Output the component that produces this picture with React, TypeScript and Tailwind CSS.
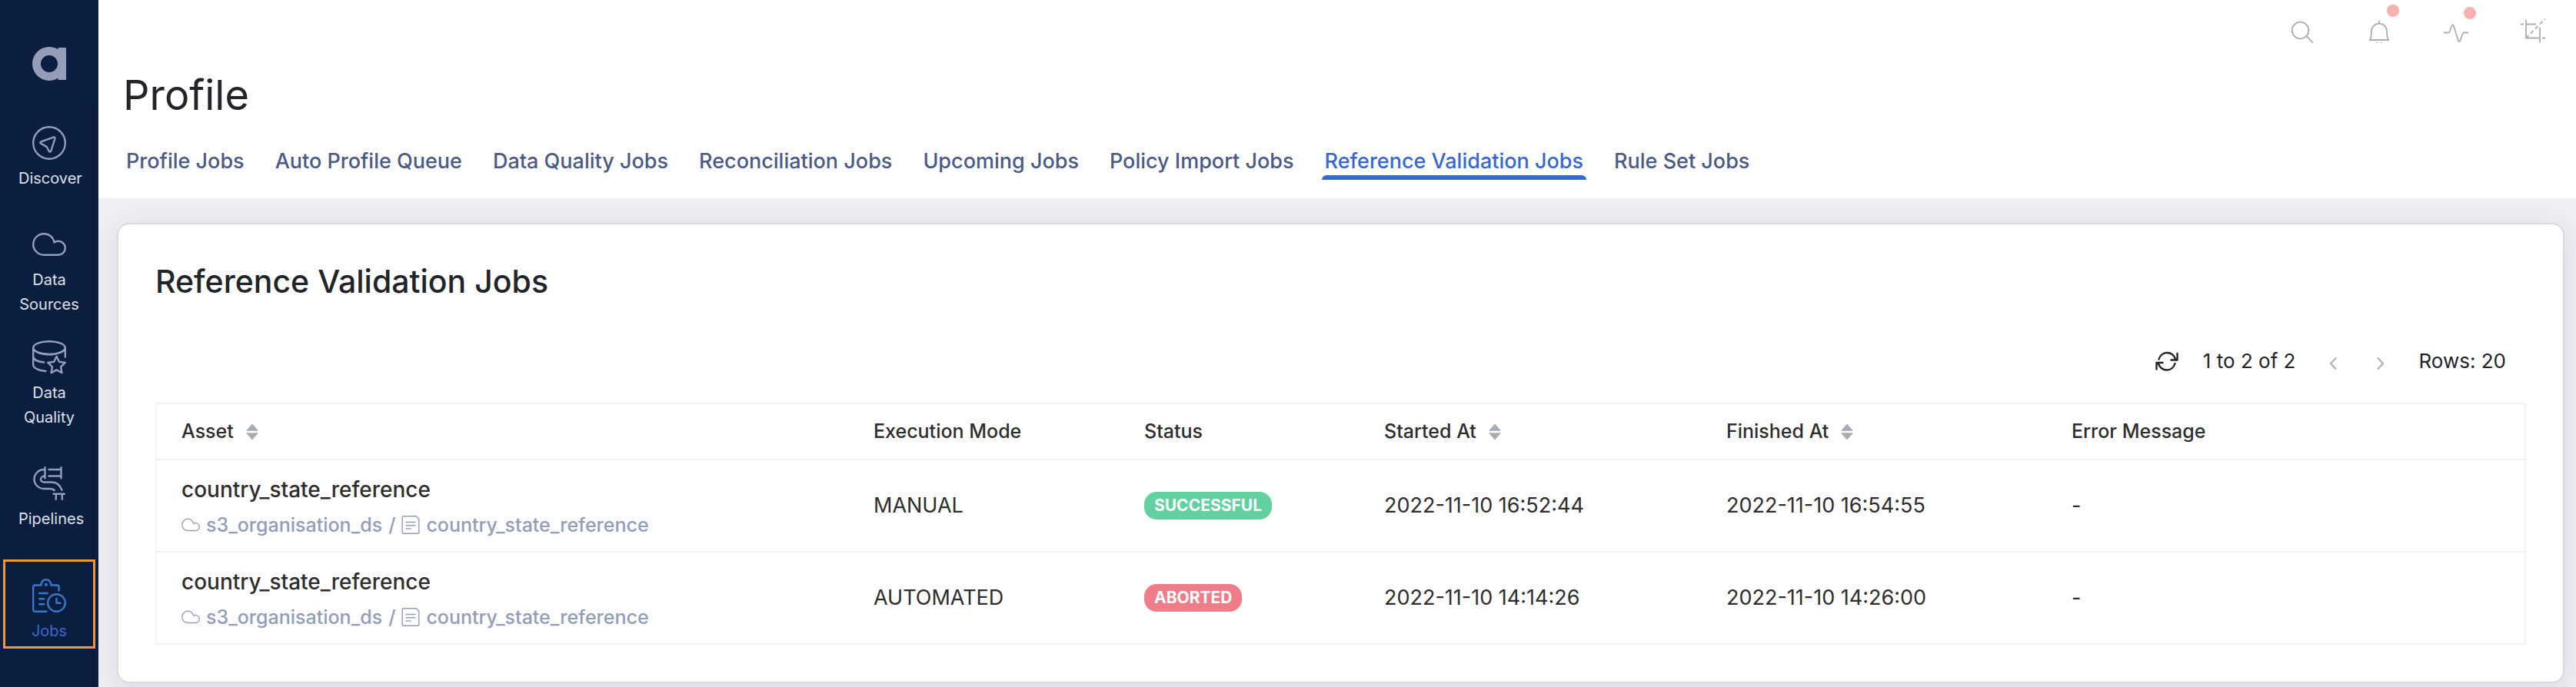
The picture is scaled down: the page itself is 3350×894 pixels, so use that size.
import type { ReactNode } from "react";

interface NavItem {
  label: string;
  icon: ReactNode;
  spacing: string;
  active?: boolean;
}

interface Job {
  id: number;
  asset: string;
  source: string;
  mode: string;
  status: "SUCCESSFUL" | "ABORTED";
  startedAt: string;
  finishedAt: string;
  error: string;
}

const tabs = [
  "Profile Jobs",
  "Auto Profile Queue",
  "Data Quality Jobs",
  "Reconciliation Jobs",
  "Upcoming Jobs",
  "Policy Import Jobs",
  "Reference Validation Jobs",
  "Rule Set Jobs",
];

const columns = [
  { label: "Asset", sortable: true, width: "w-[933px]" },
  { label: "Execution Mode", sortable: false, width: "w-[352px]" },
  { label: "Status", sortable: false, width: "w-[312px]" },
  { label: "Started At", sortable: true, width: "w-[445px]" },
  { label: "Finished At", sortable: true, width: "w-[449px]" },
  { label: "Error Message", sortable: false, width: "" },
];

const jobs: Job[] = [
  {
    id: 1,
    asset: "country_state_reference",
    source: "s3_organisation_ds",
    mode: "MANUAL",
    status: "SUCCESSFUL",
    startedAt: "2022-11-10 16:52:44",
    finishedAt: "2022-11-10 16:54:55",
    error: "-",
  },
  {
    id: 2,
    asset: "country_state_reference",
    source: "s3_organisation_ds",
    mode: "AUTOMATED",
    status: "ABORTED",
    startedAt: "2022-11-10 14:14:26",
    finishedAt: "2022-11-10 14:26:00",
    error: "-",
  },
];

function Logo() {
  return (
    <svg viewBox="0 0 44 44" className="size-11" fill="none" aria-hidden="true">
      <circle cx="22" cy="22" r="16.5" stroke="#959db8" strokeWidth="11" />
      <path d="M33.5 1H44v42H33.5z" fill="#959db8" />
    </svg>
  );
}

function NavIcon({ children }: { children: ReactNode }) {
  return (
    <svg
      viewBox="0 0 44 44"
      className="size-11"
      fill="none"
      stroke="currentColor"
      strokeWidth="2.4"
      strokeLinecap="round"
      strokeLinejoin="round"
      aria-hidden="true"
    >
      {children}
    </svg>
  );
}

const navItems: NavItem[] = [
  {
    label: "Discover",
    spacing: "mt-[59px]",
    icon: (
      <NavIcon>
        <circle cx="22" cy="22" r="20.8" />
        <path d="M11.3 20.3 27.6 14.6c1.2-.4 2.2.4 1.9 1.7L24.3 32.5c-.5 1.4-2 1.5-2.6.2l-2.5-4.9c-.3-.6-.6-.9-1.2-1.2l-6.7-3.8c-1.2-.7-1.1-2 0-2.5Z" />
      </NavIcon>
    ),
  },
  {
    label: "Data Sources",
    spacing: "mt-12",
    icon: (
      <NavIcon>
        <path d="M15.3 35.8h18.4c5 0 9.1-4 9.1-9s-4.1-9-9.1-9c-1.900 0-3.700.6-5.200 1.600C27.500 12.800 22 8.200 15.300 8.200 7.600 8.200 1.200 14.400 1.200 22s6.400 13.800 14.100 13.800Z" />
      </NavIcon>
    ),
  },
  {
    label: "Data Quality",
    spacing: "mt-[31px]",
    icon: (
      <NavIcon>
        <ellipse cx="22" cy="9.6" rx="20.8" ry="8.4" />
        <path d="M1.2 9.6v22.200c0 4 6.500 7.400 16.300 8.200M42.800 9.600v12M1.200 9.600c0 4.800 9.500 8.600 21 8.600 1.500 0 3 0 4.400-.2M42.800 9.600c0 2.500-2.600 4.800-7.400 6.400M1.200 21c.5 3.800 6 6.700 14 7.500" />
        <path d="m31.600 20.700 3.400 7.100 7.800 1.100-5.700 5.400 1.400 7.800-6.900-3.700-7 3.700 1.400-7.800-5.700-5.400 7.900-1.100Z" />
      </NavIcon>
    ),
  },
  {
    label: "Pipelines",
    spacing: "mt-12",
    icon: (
      <NavIcon>
        <path d="M16.500 1.200v14M37.500 1.200v14M21.500 4h16M21.500 12.500h16M16.500 4h-1.200C8 4 2.500 9.800 2.500 16.500S8 29 15.300 29h7.500c2.500 0 4.500.6 6 2M16.500 12.500c-3.200 0-5.500 1.600-5.500 4s2 4 4.500 4h10.200c5.800 0 10.300 3.700 12.800 10.300M27.500 35.800h14.300M30.800 35.800v7M38.800 35.800v7" />
      </NavIcon>
    ),
  },
  {
    label: "Jobs",
    spacing: "mt-[37px]",
    active: true,
    icon: (
      <NavIcon>
        <path d="M18.500 42.800H3.700c-1.400 0-2.500-1.100-2.500-2.500V11c0-1.400 1.100-2.500 2.500-2.500h7.600c.6-4.300 3-7.300 6.600-7.300s6 3 6.600 7.300h7.600c1.400 0 2.500 1.100 2.500 2.500v4.500M9.200 19h10.600M9.200 26.200h6M9.200 33.200h6" />
        <circle cx="31.5" cy="31.5" r="11.3" />
        <path d="M31.500 26v5.700h5.200" />
        <circle cx="17.9" cy="7.8" r="0.9" fill="currentColor" />
      </NavIcon>
    ),
  },
];

function Sidebar() {
  return (
    <aside className="relative flex w-32 shrink-0 flex-col items-center bg-[#0b1e3f] pt-[61px]">
      <a href="#" aria-label="Home">
        <Logo />
      </a>
      <nav className="flex w-full flex-col items-center px-1">
        {navItems.map((item) => (
          <a
            key={item.label}
            href="#"
            aria-current={item.active ? "page" : undefined}
            className={`${item.spacing} relative z-10 flex w-full flex-col items-center gap-2 text-center text-xl leading-8 ${
              item.active
                ? "border-3 border-[#f39530] pt-[22px] pb-1 text-[#3a68c8]"
                : "text-[#dce0e8]"
            }`}
          >
            <span className={item.active ? "text-[#3a76c8]" : "text-[#959db8]"}>
              {item.icon}
            </span>
            <span className="w-20">{item.label}</span>
          </a>
        ))}
      </nav>
      {/* scrollbar track */}
      <div className="absolute top-[135px] right-1.5 bottom-0 w-0.5 bg-[#08172f]" />
    </aside>
  );
}

function ToolbarIcon({ children }: { children: ReactNode }) {
  return (
    <svg
      viewBox="0 0 32 32"
      className="size-8"
      fill="none"
      stroke="currentColor"
      strokeWidth="1.8"
      strokeLinejoin="round"
      aria-hidden="true"
    >
      {children}
    </svg>
  );
}

function Toolbar() {
  return (
    <div className="flex justify-end gap-[68px] pt-6 pr-10 text-[#aeaeae]">
      <button type="button" aria-label="Search">
        <ToolbarIcon>
          <circle cx="13.5" cy="15.5" r="10.8" />
          <path d="m21.5 23 8.5 8.800" />
        </ToolbarIcon>
      </button>
      <button type="button" aria-label="Notifications" className="relative">
        <ToolbarIcon>
          <path d="M16 3v4M3 28h26M4.200 28c1.500-3.500 1.800-6.500 1.800-11 0-6 4.300-10.300 10-10.300S26 11 26 17c0 4.500.3 7.500 1.800 11M13 31c.8 3 5.200 3 6 0" />
        </ToolbarIcon>
        <span className="absolute -top-[18px] -right-2.5 size-4 rounded-full bg-[#f7b1b1]" />
      </button>
      <button type="button" aria-label="Activity" className="relative">
        <ToolbarIcon>
          <path d="M0 18.500h6c.8 0 1.200-.3 1.500-1l3.100-8.300c.5-1.300 1.700-1.300 2.100 0l6.400 20c.4 1.300 1.600 1.300 2.100 0l3.600-9.700c.3-.7.700-1 1.500-1H32" />
        </ToolbarIcon>
        <span className="absolute -top-[15px] -right-2.5 size-4 rounded-full bg-[#f7b1b1]" />
      </button>
      <button type="button" aria-label="Crop">
        <ToolbarIcon>
          <path d="M7 1.500v24h18M7 7.500h13M25 11.500v20M0 7.500h4M28 25.500h4" />
          <path d="M7 25.500 32 .5" strokeDasharray="5 3.500" />
        </ToolbarIcon>
      </button>
    </div>
  );
}

function SortIcon() {
  return (
    <svg viewBox="0 0 16 22" className="h-[22px] w-4" fill="#a9acb4" aria-hidden="true">
      <path d="M8 .5 15.500 9v.8H.5V9ZM8 21.500 15.500 13v-.8H.5v.8Z" />
    </svg>
  );
}

function CloudIcon() {
  return (
    <svg
      viewBox="0 0 24 18"
      className="h-[18px] w-6"
      fill="none"
      stroke="currentColor"
      strokeWidth="1.3"
      aria-hidden="true"
    >
      <path d="M8.300 16.500h10.200c2.700 0 4.800-2.200 4.800-4.900s-2.100-4.900-4.800-4.900c-1 0-2 .3-2.800.8C15.200 3.900 12.100 1.200 8.300 1.200 4.200 1.200.8 4.600.8 8.900s3.400 7.600 7.500 7.600Z" />
    </svg>
  );
}

function DocumentIcon() {
  return (
    <svg
      viewBox="0 0 24 24"
      className="size-6"
      fill="none"
      stroke="currentColor"
      strokeWidth="1.4"
      aria-hidden="true"
    >
      <path d="M2.500.8h16.500l3.800 3.500v17.600c0 .8-.5 1.300-1.300 1.300h-19c-.8 0-1.300-.5-1.300-1.300V2.100c0-.8.500-1.300 1.300-1.300ZM5.500 8.500h13M5.500 12.800h13M5.500 17h7" />
    </svg>
  );
}

function Pagination() {
  return (
    <div className="mt-[54px] flex items-center justify-end pr-[26px] text-[26px] leading-10 text-[#212529]">
      <button type="button" aria-label="Refresh" className="mr-8">
        <svg
          viewBox="0 0 30 26"
          className="h-[26px] w-[30px]"
          fill="none"
          stroke="currentColor"
          strokeWidth="2.4"
          strokeLinecap="round"
          strokeLinejoin="round"
          aria-hidden="true"
        >
          <path d="M4.500 10.500C6 5.500 10 2 15 2c5.500 0 9.500 3.500 11.500 9M28.500 3v8.500h-8M25.500 16C24 21 20 24.500 15 24.500c-5.500 0-9.500-3.500-11.500-9M1.500 23.500V15h8" />
        </svg>
      </button>
      <span>1 to 2 of 2</span>
      <button type="button" aria-label="Previous page" className="ml-11 pt-1.5 text-[#b0b0b0]">
        <svg
          viewBox="0 0 10 18"
          className="h-[18px] w-2.5"
          fill="none"
          stroke="currentColor"
          strokeWidth="2.2"
          aria-hidden="true"
        >
          <path d="M9 1.500 2 9l7 7.500" />
        </svg>
      </button>
      <button type="button" aria-label="Next page" className="mr-11 ml-[52px] pt-1.5 text-[#b0b0b0]">
        <svg
          viewBox="0 0 10 18"
          className="h-[18px] w-2.5"
          fill="none"
          stroke="currentColor"
          strokeWidth="2.2"
          aria-hidden="true"
        >
          <path d="m1 1.500 7 7.500-7 7.500" />
        </svg>
      </button>
      <span>Rows: 20</span>
    </div>
  );
}

function JobsTable() {
  return (
    <table className="mt-[34px] w-full table-fixed border-collapse border-2 border-[#f2f2f8] text-left text-[#2e2e2e]">
      <thead>
        <tr className="h-[73px] border-b-2 border-[#f2f2f8] text-[25px]">
          {columns.map((column) => (
            <th key={column.label} className={`${column.width} p-0 font-medium first:pl-8`}>
              {column.sortable ? (
                <button type="button" className="flex items-center gap-4">
                  {column.label}
                  <SortIcon />
                </button>
              ) : (
                column.label
              )}
            </th>
          ))}
        </tr>
      </thead>
      <tbody>
        {jobs.map((job) => (
          <tr
            key={job.id}
            className="h-[120px] border-b-2 border-[#f2f2f8] text-[27px] leading-10"
          >
            <td className="pt-1 pl-8">
              <div className="text-[28px] leading-[46px] font-medium">{job.asset}</div>
              <div className="flex items-center gap-2 text-[25px] leading-[46px] font-medium text-[#929db9]">
                <CloudIcon />
                <a href="#">{job.source}</a>
                <span>/</span>
                <DocumentIcon />
                <a href="#">{job.asset}</a>
              </div>
            </td>
            <td>{job.mode}</td>
            <td>
              <span
                className={`block w-fit rounded-2xl px-[13px] text-[21px] leading-9 font-bold text-white ${
                  job.status === "SUCCESSFUL" ? "bg-[#62d09f]" : "bg-[#ee7d89]"
                }`}
              >
                {job.status}
              </span>
            </td>
            <td>{job.startedAt}</td>
            <td>{job.finishedAt}</td>
            <td>{job.error}</td>
          </tr>
        ))}
      </tbody>
    </table>
  );
}

export default function App() {
  const activeTab = "Reference Validation Jobs";

  return (
    <div className="flex min-h-screen bg-[#eff0f5] font-['Inter',sans-serif]">
      <Sidebar />
      <div className="flex min-w-0 flex-1 flex-col">
        <header className="bg-white pb-6">
          <Toolbar />
          <h1 className="mt-8 pl-8 text-[54px] leading-[72px] text-[#212529]">Profile</h1>
          <nav className="mt-8 flex gap-8 pl-8">
            {tabs.map((tab) => (
              <a
                key={tab}
                href="#"
                aria-current={tab === activeTab ? "page" : undefined}
                className={`flex flex-col px-1 text-[27px] leading-9 font-medium ${
                  tab === activeTab ? "text-[#3868cc]" : "text-[#4a5a82]"
                }`}
              >
                {tab}
                {tab === activeTab && (
                  <span className="-mx-1 h-1.5 rounded-t-md bg-[#3868cc]" />
                )}
              </a>
            ))}
          </nav>
        </header>
        <main className="flex-1 pt-8 pr-[15px] pb-1 pl-6">
          <section className="rounded-2xl border-2 border-[#d9dae2] bg-white px-12 pb-12 shadow-[0_8px_40px_rgba(40,50,80,0.12)]">
            <h2 className="pt-11 text-[41px] leading-[60px] font-medium text-[#212529]">
              Reference Validation Jobs
            </h2>
            <Pagination />
            <JobsTable />
          </section>
        </main>
      </div>
    </div>
  );
}
